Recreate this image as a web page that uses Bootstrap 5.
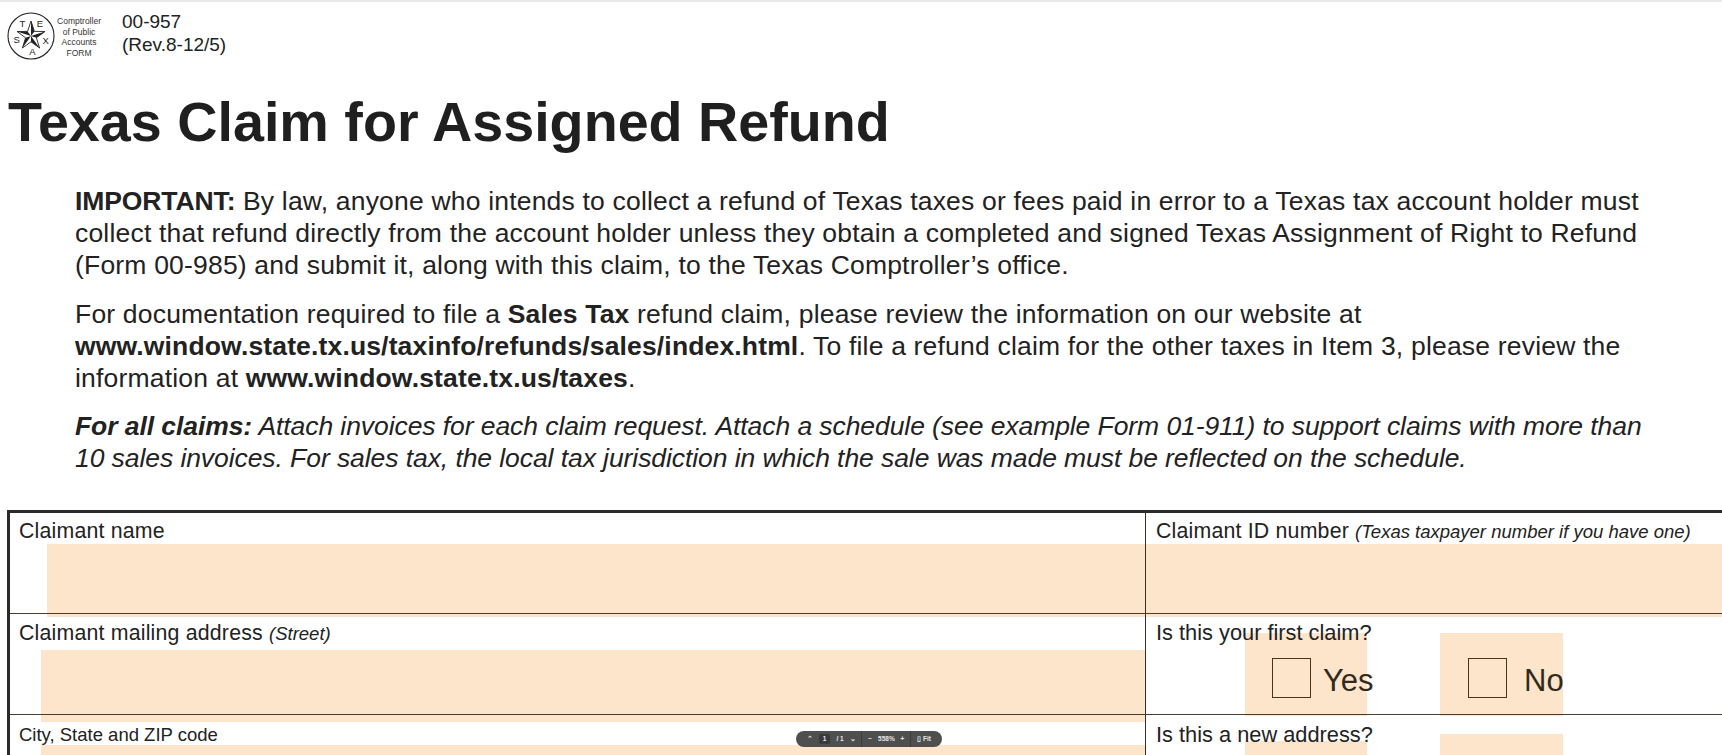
<!DOCTYPE html>
<html lang="en">
<head>
<meta charset="utf-8">
<title>Texas Claim for Assigned Refund</title>
<link rel="stylesheet" href="https://cdn.jsdelivr.net/npm/bootstrap@5.3.0/dist/css/bootstrap.min.css">
<style>
html,body{height:755px;overflow:hidden;background:#fff}
body{font-family:"Liberation Sans",Arial,sans-serif;color:#222}
.topline{height:2px;background:#e8e8e8}
.formhead{padding:10px 0 0 7px;height:62px}
.sealmark{width:48px;height:48px;flex:none}
.sealtext{font-size:8.5px;line-height:10.5px;width:50px;text-align:center;margin-top:4px;margin-left:-1px;white-space:nowrap;color:#333}
.formno{font-size:19px;line-height:22.5px;margin-left:18px;margin-top:-1px}
.maintitle{font-size:55.7px;font-weight:700;line-height:62px;margin:27px 0 0 8px;color:#1f1f1f;white-space:nowrap}
.intro{margin:32px 0 0 75px;width:1600px;font-size:26.5px;line-height:32px;letter-spacing:.19px}
.intro p{margin:0 0 16.500px}
.intro b{letter-spacing:.15px}
.intro .leadin{letter-spacing:-.1px}
.intro .allclaims,.intro .allclaims b{letter-spacing:-.075px;margin-bottom:0}
.claimgrid{position:relative;z-index:0;margin:35.500px 0 0 7px;width:1715px;height:245px;border-top:3px solid #2b2b2b;border-left:3px solid #2b2b2b}
.gridrow{display:flex;border-bottom:1.5px solid #4a3d2e}
.r1{height:101px}.r2{height:101.5px}.r3{height:46px;border-bottom:0}
.lcell{width:1136px;flex:none;border-right:1.5px solid #3a3026;position:relative;padding:5px 0 0 9px}
.rcell{flex:1;position:relative;padding:5px 0 0 10px}
.r2 .lcell,.r2 .rcell{padding-top:6.500px}
.r3 .lcell,.r3 .rcell{padding-top:7px}
.lbl{font-size:21.3px;line-height:26px;letter-spacing:.2px;white-space:nowrap}
.lbl i{font-size:18.5px;letter-spacing:0}
.lbl.tight{font-size:21.8px;letter-spacing:0}
.lbl.city{font-size:18.5px;letter-spacing:0}
.fillbox{background:#fce5ca;position:absolute;z-index:-1}
.fillname{left:36.500px;right:0;top:31.500px;bottom:-4px}
.fillid{left:0;right:0;top:31.500px;bottom:-4px}
.fillstreet{left:31px;right:0;top:36px;bottom:-8px}
.fillcity{left:31px;right:0;top:30px;bottom:0}
.fillyes{left:99px;width:122px;top:19px;bottom:-2px}
.fillno{left:294px;width:123px;top:19px;bottom:-2px}
.fillyes2{left:99px;width:122px;top:26px;bottom:0}
.fillno2{left:294px;width:123px;top:18.500px;bottom:0}
.optbox{width:39px;height:40px;border:1.5px solid #4a3418;position:absolute;top:44.500px}
.optlbl{position:absolute;font-size:31px;line-height:36px;top:49px;color:#332a1e}
.optyes{left:126px}.optno{left:322px}
.lblyes{left:177px}.lblno{left:378px}
.viewerbar{position:absolute;left:796px;top:731px;width:146px;height:16px;border-radius:8px;background:#4f4f4f;color:#e8e8e8;font-size:6.5px;line-height:16px;font-weight:700}
.viewerbar span{display:block}
.numbox{background:#3a3a3a;padding:0 4px;line-height:10px;border-radius:2px}
.vsep{width:1px;height:16px;background:#3d3d3d}
.sealletter{font-size:9.5px;fill:#222;font-family:"Liberation Sans",sans-serif;text-anchor:middle}
</style>
</head>
<body>
<div class="topline"></div>
<div class="formhead d-flex align-items-start">
<svg class="sealmark" viewBox="0 0 48 48" role="img" aria-label="Texas seal">
<circle cx="24" cy="24" r="23" fill="none" stroke="#222" stroke-width="1.1"/>
<polygon points="24,9 27.400,19.400 38,19.500 29.400,25.800 32.600,36 24,29.800 15.400,36 18.600,25.800 10,19.500 20.600,19.400" fill="#fff" stroke="#222" stroke-width=".9"/>
<path d="M24 24V9L27.400 19.400ZM24 24 38 19.500 29.400 25.800ZM24 24 32.600 36 24 29.800ZM24 24 15.400 36 18.600 25.800ZM24 24 10 19.500 20.600 19.400Z" fill="#222"/>
<text class="sealletter" x="15.300" y="14.500">T</text>
<text class="sealletter" x="33" y="14.500">E</text>
<text class="sealletter" x="9.700" y="31">S</text>
<text class="sealletter" x="38.700" y="32">X</text>
<text class="sealletter" x="25.300" y="43">A</text>
</svg>
<div class="sealtext">Comptroller<br>of Public<br>Accounts<br>FORM</div>
<div class="formno">00-957<br>(Rev.8-12/5)</div>
</div>
<h1 class="maintitle">Texas Claim for Assigned Refund</h1>
<div class="intro">
<p><b class="leadin">IMPORTANT:</b> By law, anyone who intends to collect a refund of Texas taxes or fees paid in error to a Texas tax account holder must collect that refund directly from the account holder unless they obtain a completed and signed Texas Assignment of Right to Refund (Form 00-985) and submit it, along with this claim, to the Texas Comptroller’s office.</p>
<p>For documentation required to file a <b>Sales Tax</b> refund claim, please review the information on our website at <b>www.window.state.tx.us/taxinfo/refunds/sales/index.html</b>. To file a refund claim for the other taxes in Item 3, please review the information at <b>www.window.state.tx.us/taxes</b>.</p>
<p class="allclaims"><i><b>For all claims:</b> Attach invoices for each claim request. Attach a schedule (see example Form 01-911) to support claims with more than 10 sales invoices. For sales tax, the local tax jurisdiction in which the sale was made must be reflected on the schedule.</i></p>
</div>
<div class="claimgrid">
<div class="gridrow r1">
<div class="lcell"><div class="fillbox fillname"></div><div class="lbl">Claimant name</div></div>
<div class="rcell"><div class="fillbox fillid"></div><div class="lbl">Claimant ID number <i>(Texas taxpayer number if you have one)</i></div></div>
</div>
<div class="gridrow r2">
<div class="lcell"><div class="fillbox fillstreet"></div><div class="lbl">Claimant mailing address <i>(Street)</i></div></div>
<div class="rcell"><div class="fillbox fillyes"></div><div class="fillbox fillno"></div><div class="lbl tight">Is this your first claim?</div><div class="optbox optyes"></div><div class="optlbl lblyes">Yes</div><div class="optbox optno"></div><div class="optlbl lblno">No</div></div>
</div>
<div class="gridrow r3">
<div class="lcell"><div class="fillbox fillcity"></div><div class="lbl city">City, State and ZIP code</div></div>
<div class="rcell"><div class="fillbox fillyes2"></div><div class="fillbox fillno2"></div><div class="lbl tight">Is this a new address?</div></div>
</div>
</div>
<div class="viewerbar d-flex align-items-center justify-content-around px-2">
<span>⌃</span><span class="numbox">1</span><span>/ 1</span><span>⌄</span><span class="vsep"></span><span>−</span><span>558%</span><span>+</span><span class="vsep"></span><span>▯ Fit</span>
</div>
</body>
</html>
